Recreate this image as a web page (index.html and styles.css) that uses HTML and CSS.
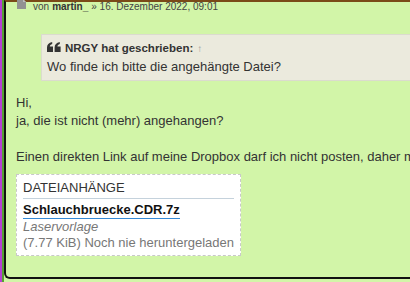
FILE: index.html
```
<!DOCTYPE html>
<html lang="de">
<head>
    <meta charset="UTF-8">
    <meta name="viewport" content="width=device-width, initial-scale=1.0">
    <title>Schlauchbruecke</title>
    <link rel="stylesheet" href="styles.css">
</head>
<body>
    <div class="page">
        <div class="frame">
            <div class="post">
                <p class="author">
                    <svg class="post-icon" width="9" height="10" viewBox="0 0 9 10">
                        <path d="M0 0 H6 L9 3 V10 H0 Z" fill="#929292"/>
                        <path d="M6 0 V3 H9" fill="#bdbdbd"/>
                    </svg>
                    von <strong>martin_</strong> » 16. Dezember 2022, 09:01
                </p>

                <blockquote class="quote">
                    <cite>
                        <svg class="quote-icon" width="14" height="10" viewBox="0 0 14 10">
                            <path d="M0 10 V5.6 C0 2.6 1.8 0.6 5.2 0 V2 C3.6 2.5 2.9 3.4 2.8 4.6 H6 V10 Z" fill="#333"/>
                            <path d="M7.6 10 V5.6 C7.6 2.6 9.4 0.6 12.8 0 V2 C11.2 2.5 10.5 3.4 10.4 4.6 H13.6 V10 Z" fill="#333"/>
                        </svg>
                        NRGY hat geschrieben: <span class="up">↑</span>
                    </cite>
                    <div>Wo finde ich bitte die angehängte Datei?</div>
                </blockquote>

                <div class="content">
                    Hi,<br>
                    ja, die ist nicht (mehr) angehangen?<br>
                    <br>
                    Einen direkten Link auf meine Dropbox darf ich nicht posten, daher musst du mir eine PN schreiben.
                </div>

                <dl class="attachbox">
                    <dt>Dateianhänge</dt>
                    <dd><a class="file" href="#">Schlauchbruecke.CDR.7z</a></dd>
                    <dd class="comment">Laservorlage</dd>
                    <dd class="info">(7.77 KiB) Noch nie heruntergeladen</dd>
                </dl>
            </div>
        </div>
    </div>
</body>
</html>
```

FILE: styles.css
```
body {
    margin: 0;
    overflow: hidden;
    font-family: "Liberation Sans", Arial, sans-serif;
    color: #333;
    background-color: #d2f5a8;
}
.page {
    border-left: 2px solid #b63fd4;
}
.frame {
    border-left: 2px solid #57a032;
    padding-bottom: 5px;
}
.post {
    width: 700px;
    background: #d2f5a8;
    border-top: 2px solid #7a4a18;
    border-left: 2px solid #111;
    border-bottom: 2px solid #111;
    border-bottom-left-radius: 6px;
    padding: 0 0 21px 10px;
}
.author {
    margin: -2px 0 0 0;
    font-size: 10px;
    line-height: 13px;
    display: flex;
    align-items: center;
    gap: 3px;
    color: #444;
}
.author strong {
    color: #333;
}
.post-icon {
    align-self: flex-start;
    margin: -1px 4px 0 1px;
}
.quote {
    margin: 21px 0 13px 25px;
    background: #ebeadd;
    border: 1px solid #dbdbce;
    padding: 6px 5px 4px;
    font-size: 13px;
    line-height: 18px;
}
.quote cite {
    display: flex;
    align-items: center;
    gap: 4px;
    font-style: normal;
    font-weight: bold;
    font-size: 11.5px;
    line-height: 15px;
    margin-bottom: 2px;
}
.quote-icon {
    margin-top: -3px;
}
.up {
    font-weight: normal;
    color: #999;
    font-size: 10px;
}
.content {
    font-size: 13px;
    line-height: 18px;
}
.attachbox {
    width: fit-content;
    margin: 8px 0 0 0;
    padding: 5px 6px 4px;
    background: #fff;
    border: 1px dashed #c9c9c9;
    font-size: 13px;
    line-height: 16px;
}
.attachbox dt {
    text-transform: uppercase;
    padding-bottom: 2px;
    border-bottom: 1px solid #c5d2dc;
}
.attachbox dd {
    margin: 0;
}
.file {
    display: inline-block;
    margin-top: 3px;
    font-weight: bold;
    color: #111;
    text-decoration: none;
    border-bottom: 1px solid #368ad6;
}
.comment {
    font-style: italic;
    color: #777;
}
.info {
    color: #777;
}
```
